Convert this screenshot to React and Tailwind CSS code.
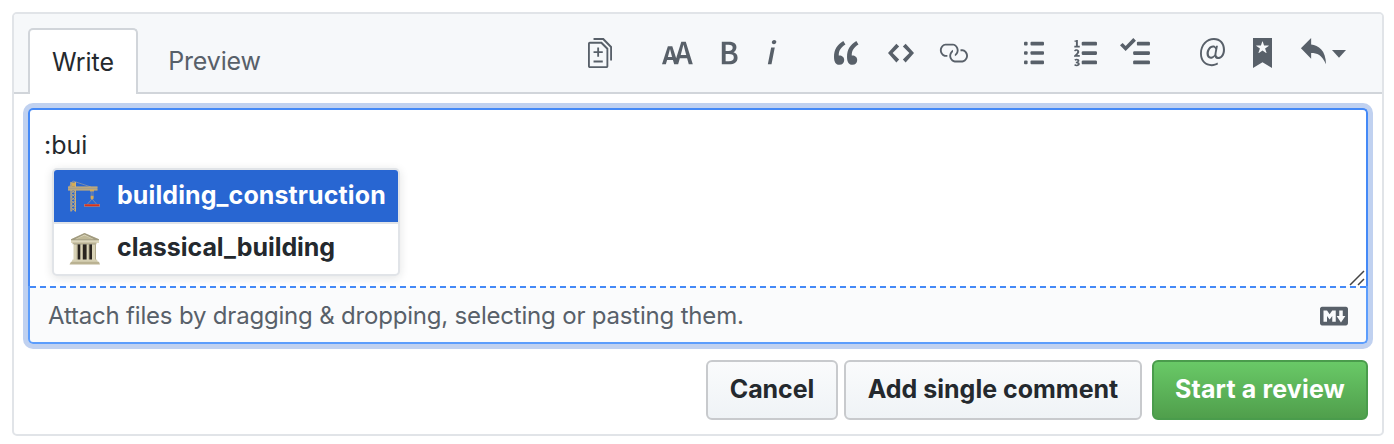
const P = {
  diff: "M6 7h2v1H6v2H5V8H3V7h2V5h1v2zm-3 6h5v-1H3v1zM7.5 2L11 5.5V15c0 .55-.45 1-1 1H1c-.55 0-1-.45-1-1V3c0-.55.45-1 1-1h6.5zM10 6L7 3H1v12h9V6zM8.5 0L13 4.5V12h-1V5L8 1H3V0h5.5z",
  text: "M13.62 9.08L12.1 3.66h-.06l-1.5 5.42h3.08zM5.7 10.13S4.68 6.52 4.53 6.02h-.08l-1.13 4.11H5.7zM17.31 14h-2.25l-.95-3.25h-4.07L9.09 14H6.84l-.69-2.33H2.87L2.17 14H0l3.3-9.59h2.5l2.17 6.34L10.86 2h2.52l3.94 12h-.01z",
  bold: "M1 2h3.83c2.48 0 4.3.75 4.3 2.95 0 1.14-.63 2.23-1.67 2.61v.06c1.33.3 2.3 1.23 2.3 2.86 0 2.39-1.97 3.52-4.61 3.52H1V2zm3.66 4.95c1.67 0 2.38-.66 2.38-1.69 0-1.17-.78-1.61-2.34-1.61H3.13v3.3h1.53zm.27 5.39c1.77 0 2.75-.64 2.75-1.98 0-1.27-.95-1.81-2.75-1.81h-1.8v3.8h1.8v-.01z",
  italic: "M2.81 5h1.98L3 14H1l1.81-9zm.36-2.7c0-.7.58-1.3 1.33-1.3.56 0 1.13.38 1.13 1.03 0 .75-.59 1.3-1.33 1.3-.58 0-1.13-.38-1.13-1.03z",
  quote: "M6.16 3.5C3.73 5.06 2.55 6.67 2.55 9.36c.16-.05.3-.05.44-.05 1.27 0 2.5.86 2.5 2.41 0 1.61-1.03 2.61-2.5 2.61-1.9 0-2.99-1.52-2.99-4.25 0-3.8 1.75-6.53 5.02-8.42L6.16 3.5zm7 0c-2.43 1.56-3.61 3.17-3.61 5.86.16-.05.3-.05.44-.05 1.27 0 2.5.86 2.5 2.41 0 1.61-1.03 2.61-2.5 2.61-1.89 0-2.98-1.52-2.98-4.25 0-3.8 1.75-6.53 5.02-8.42l1.14 1.84h-.01z",
  code: "M9.5 3L8 4.5 11.5 8 8 11.5 9.5 13 14 8 9.5 3zm-5 0L0 8l4.5 5L6 11.5 2.5 8 6 4.5 4.5 3z",
  link: "M4 9h1v1H4c-1.5 0-3-1.69-3-3.5S2.55 3 4 3h4c1.45 0 3 1.69 3 3.5 0 1.41-.91 2.72-2 3.25V8.59c.58-.45 1-1.27 1-2.09C10 5.22 8.98 4 8 4H4c-.98 0-2 1.22-2 2.5S3 9 4 9zm9-3h-1v1h1c1 0 2 1.22 2 2.5S13.98 12 13 12H9c-.98 0-2-1.22-2-2.5 0-.83.42-1.64 1-2.09V6.25c-1.09.53-2 1.84-2 3.25C6 11.31 7.55 13 9 13h4c1.45 0 3-1.69 3-3.5S14.5 6 13 6z",
  ordered: "M12.01 13c0 .59 0 1-.59 1H4.6c-.59 0-.59-.41-.59-1 0-.59 0-1 .59-1h6.81c.59 0 .59.41.59 1h.01zM4.6 4h6.81C12 4 12 3.59 12 3c0-.59 0-1-.59-1H4.6c-.59 0-.59.41-.59 1 0 .59 0 1 .59 1zm6.81 3H4.6c-.59 0-.59.41-.59 1 0 .59 0 1 .59 1h6.81C12 9 12 8.59 12 8c0-.59 0-1-.59-1zM2.01 1h-.72c-.3.19-.58.25-1.03.34V2h.75v2.14H.17V5h2.84v-.86h-1V1zm.25 8.13c-.17 0-.45.03-.66.06.53-.56 1.14-1.25 1.14-1.89C2.72 6.52 2.17 6 1.38 6c-.59 0-.97.2-1.38.64l.58.58c.19-.19.38-.38.64-.38.28 0 .48.16.48.52 0 .53-.77 1.2-1.7 2.06V10h3v-.88h-.74v.01zm-.08 3.78c.44-.19.64-.47.64-.88C2.82 11.4 2.29 11 1.44 11c-.48 0-.89.19-1.28.52l.55.64c.25-.2.44-.31.69-.31.27 0 .42.13.42.36 0 .27-.2.44-.86.44v.75c.83 0 .98.17.98.47 0 .25-.23.38-.58.38-.28 0-.56-.14-.81-.38l-.48.66c.3.36.77.56 1.41.56.83 0 1.53-.41 1.53-1.16 0-.5-.31-.81-.77-.94v-.03z",
  task: "M15.41 9H7.59C7 9 7 8.59 7 8c0-.59 0-1 .59-1h7.81c.59 0 .59.41.59 1 0 .59 0 1-.59 1h.01zM9.59 4C9 4 9 3.59 9 3c0-.59 0-1 .59-1h5.81c.59 0 .59.41.59 1 0 .59 0 1-.59 1H9.59zM0 3.91l1.41-1.3L3 4.2 7.09 0 8.5 1.41 3 6.91l-3-3zm7.59 8.09h7.81c.59 0 .59.41.59 1 0 .59 0 1-.59 1H7.59C7 14 7 13.59 7 13c0-.59 0-1 .59-1z",
  mention: "M6.58 15c1.25 0 2.52-.31 3.56-.94l-.42-.94c-.84.52-1.89.83-3.03.83-3.23 0-5.64-2.08-5.64-5.72 0-4.37 3.23-7.18 6.58-7.18 3.45 0 5.22 2.19 5.22 5.2 0 2.39-1.34 3.86-2.5 3.86-1.05 0-1.36-.73-1.05-2.19l.73-3.75H8.98l-.11.72c-.41-.63-.94-.83-1.56-.83-2.19 0-3.66 2.39-3.66 4.38 0 1.67.94 2.61 2.3 2.61.84 0 1.67-.53 2.3-1.25.11.94.94 1.45 1.98 1.45 1.67 0 3.77-1.67 3.77-5C14 2.61 11.59 0 7.83 0 3.66 0 0 3.33 0 8.33 0 12.71 2.92 15 6.58 15zm-.31-5c-.73 0-1.36-.52-1.36-1.67 0-1.45.94-3.22 2.41-3.22.52 0 .84.2 1.25.83l-.52 3.02c-.63.73-1.25 1.05-1.78 1.05V10z",
  bookmark: "M10 0H0v16l5-3.09L10 16V0zM8.22 4.25L6.36 5.61l.72 2.16c.06.22-.02.28-.2.17L5 6.6 3.12 7.94c-.19.11-.25.05-.2-.17l.72-2.16-1.86-1.36c-.17-.16-.14-.23.09-.23l2.3-.03.7-2.16h.25l.7 2.16 2.3.03c.23 0 .27.08.09.23h.01z",
  reply: "M6 3.5c3.92.44 8 3.125 8 10.5-2.312-5.062-4.75-6-8-6V11L.5 5.5 6 0v3.5z",
  markdown: "M14.85 3H1.15C.52 3 0 3.52 0 4.15v7.69C0 12.48.52 13 1.15 13h13.69c.64 0 1.15-.52 1.15-1.15v-7.7C16 3.52 15.48 3 14.85 3zM9 11H7V8L5.5 9.92 4 8v3H2V5h2l1.5 2L7 5h2v6zm2.99.5L9.5 8H11V5h2v3h1.5l-2.51 3.5z",
};

function Icon({ name, box, className }) {
  return (
    <svg viewBox={box} preserveAspectRatio="none" fill="currentColor" fillRule="evenodd" className={`h-[30px] shrink-0 ${className}`}>
      <path d={P[name]} />
    </svg>
  );
}

function Toolbar() {
  return (
    <div className="mr-[36px] ml-auto flex h-[78px] items-center text-[#586069]">
      <Icon name="diff" box="0 0 13 16" className="mr-[50px] w-[24px]" />
      <Icon name="text" box="0 0 18 16" className="mr-[26px] w-[32px]" />
      <Icon name="bold" box="0 0 10 16" className="mr-[28px] w-[18px]" />
      <Icon name="italic" box="0 0 6 16" className="mr-[57px] w-[11px]" />
      <Icon name="quote" box="0 0 14 16" className="mr-[28px] w-[26px]" />
      <Icon name="code" box="0 0 14 16" className="mr-[24px] w-[26px]" />
      <Icon name="link" box="0 0 16 16" className="mr-[56px] w-[30px]" />
      <svg viewBox="0 0 20 30" fill="currentColor" className="mr-[30px] h-[30px] w-[20px] shrink-0">
        <rect x="0" y="3.800" width="3.600" height="3.600" rx="1" />
        <rect x="0" y="13.200" width="3.600" height="3.600" rx="1" />
        <rect x="0" y="22.600" width="3.600" height="3.600" rx="1" />
        <rect x="6.500" y="3.800" width="13.500" height="3.600" rx="1" />
        <rect x="6.500" y="13.200" width="13.500" height="3.600" rx="1" />
        <rect x="6.500" y="22.600" width="13.500" height="3.600" rx="1" />
      </svg>
      <Icon name="ordered" box="0 0 12 16" className="mr-[23px] w-[23px]" />
      <Icon name="task" box="0 0 16 16" className="mr-[50px] w-[30px]" />
      <Icon name="mention" box="0 0 14 16" className="mr-[28px] w-[25px]" />
      <Icon name="bookmark" box="0 0 10 16" className="mr-[28px] w-[19px]" />
      <Icon name="reply" box="0 0 14 16" className="mr-[6px] w-[26px]" />
      <svg viewBox="0 0 14 8" fill="currentColor" className="mt-[2px] h-[8px] w-[14px] shrink-0">
        <path d="M0 0h14L7 7.8z" />
      </svg>
    </div>
  );
}

function Crane() {
  return (
    <svg viewBox="0 0 34 34" className="h-[34px] w-[34px] shrink-0" fill="none">
      <path d="M5 2 1 8M5 2l18 6" stroke="#8b93a5" strokeWidth=".8" />
      <path d="M3 3v29.500M7.400 3v29.500" stroke="#d3b273" strokeWidth="1.200" />
      <path d="M3 11l4.400 3.500L3 18l4.400 3.500L3 25l4.400 3.500L3 32M7.400 11L3 14.500 7.400 18 3 21.500 7.400 25 3 28.500 7.400 32" stroke="#b5a684" strokeWidth="1" />
      <path d="M0 7.800h29.500v3.400H0z" fill="#a89f88" />
      <path d="M0 8h29.500M0 11h29.500" stroke="#d3b273" strokeWidth=".9" />
      <path d="M3.500 3.500h3.500v4H3.500zM22 10.500h4v2H22z" fill="#d5ab55" />
      <path d="M23.200 12v7M25 12v7M24 20l-4.500 5M24 20l4.500 5" stroke="#8b93a5" strokeWidth=".8" />
      <path d="M22.700 16.800h2.800v3.400h-2.800z" fill="#d5ab55" />
      <path d="M16 25h16v2.800H16z" fill="#a87f80" />
      <path d="M16.800 25.400h14.400v1.700H16.800z" fill="#d8301c" />
    </svg>
  );
}

function Temple() {
  return (
    <svg viewBox="0 0 34 34" className="h-[34px] w-[34px] shrink-0">
      <path d="M16.500 1 31 7.200V11H3V7.200z" fill="#ddd7bd" />
      <path d="M16.500 3.600 26 7.600H7z" fill="#c0b997" />
      <path d="M16.500 1 31 7.200v1H3v-1zM16.500 2.600 7 7.200h19z" fill="#a19b80" fillRule="evenodd" />
      <path d="M4.500 10.500h24v1.800h-24z" fill="#b8b192" />
      <path d="M6 12.300h21.500V28H6z" fill="#29241f" />
      <path d="M5.500 12.300h4V28h-4zM12.300 12.300h2.600V28h-2.600zM18.600 12.300h2.600V28h-2.600zM24 12.300h4V28h-4z" fill="#d8d2b6" />
      <path d="M8.700 12.300h.8V28h-.8zM14.200 12.300h.7V28h-.7zM20.500 12.300h.7V28h-.7zM27.200 12.300h.8V28h-.8z" fill="#aaa283" />
      <path d="M4.500 27.500h24.500l1 3H3.500z" fill="#d6d0b3" />
      <path d="M3 29.800h28l1 2.700H1.500z" fill="#bab292" />
    </svg>
  );
}

export default function App() {
  return (
    <div className="h-[444px] w-[1394px] bg-white px-[12px] pt-[12px] pr-[10px] font-['Inter',sans-serif] text-[#24292e]">
      <div className="flex h-[424px] flex-col rounded-[5px] border-2 border-[#e1e4e8]">
        <div className="flex h-[80px] shrink-0 items-start rounded-t-[3px] border-b-2 border-[#d1d5da] bg-[#f6f8fa] pl-[14px]">
          <button className="mt-[14px] h-[66px] w-[110px] rounded-t-[5px] border-2 border-b-0 border-[#d1d5da] bg-white pt-[1px] text-[25px]">Write</button>
          <button className="mt-[14px] h-[66px] w-[153px] pt-[2px] text-[25px] tracking-[-0.15px] text-[#586069]">Preview</button>
          <Toolbar />
        </div>
        <div className="mx-[14px] mt-[14px] flex h-[236px] shrink-0 flex-col rounded-[5px] shadow-[0_0_0_5px_#c0d1f0]">
          <div className="relative h-[178px] rounded-t-[5px] border-x-2 border-t-2 border-[#4489f7]">
            <div className="pt-[17px] pl-[14px] text-[25px] leading-[36px]">:bui</div>
            <div className="absolute top-[58px] left-[22px] w-[348px] rounded-[5px] border-2 border-[#e1e4e8] bg-white text-[25px] font-[650] shadow-[0_2px_10px_rgba(27,31,35,0.12)]">
              <div className="flex h-[52px] items-center gap-[15px] rounded-t-[3px] bg-[#2866d2] pl-[14px] text-white">
                <Crane />
                <span className="tracking-[0.1px]">building_construction</span>
              </div>
              <div className="flex h-[52px] items-center gap-[15px] border-t-2 border-[#e1e4e8] pb-[1px] pl-[14px]">
                <Temple />
                <span className="-mt-[1px] tracking-[-0.05px]">classical_building</span>
              </div>
            </div>
            <svg viewBox="0 0 16 16" className="absolute right-[1px] bottom-0 h-[16px] w-[16px]" stroke="#444" strokeWidth="1.500">
              <path d="M1 15 15 1M9 15l6-6" />
            </svg>
          </div>
          <div className="flex-1 rounded-b-[5px] border-x-2 border-b-2 border-[#5c9dfc] bg-[#fafbfc]">
            <div className="flex h-[56px] items-center justify-between border-t-2 border-dashed border-[#4489f7] pt-[2px] pr-[18px] pl-[18px] text-[24px] tracking-[-0.19px] text-[#586069]">
              <span>Attach files by dragging &amp; dropping, selecting or pasting them.</span>
              <Icon name="markdown" box="0 0 16 16" className="w-[28px]" />
            </div>
          </div>
        </div>
        <div className="mt-[16px] mr-[14px] flex justify-end text-[25px] font-[650]">
          <button className="mr-[6px] h-[60px] w-[132px] rounded-[6px] border-2 border-[#c8cacd] bg-linear-to-b from-[#fafbfc] to-[#eff3f6] tracking-[-0.1px]">Cancel</button>
          <button className="mr-[10px] h-[60px] w-[298px] rounded-[6px] border-2 border-[#c8cacd] bg-linear-to-b from-[#fafbfc] to-[#eff3f6]">Add single comment</button>
          <button className="h-[60px] w-[216px] rounded-[6px] border-2 border-[#4a9c4c] bg-linear-to-b from-[#69c967] to-[#509f4c] tracking-[0.15px] text-white">Start a review</button>
        </div>
      </div>
    </div>
  );
}
